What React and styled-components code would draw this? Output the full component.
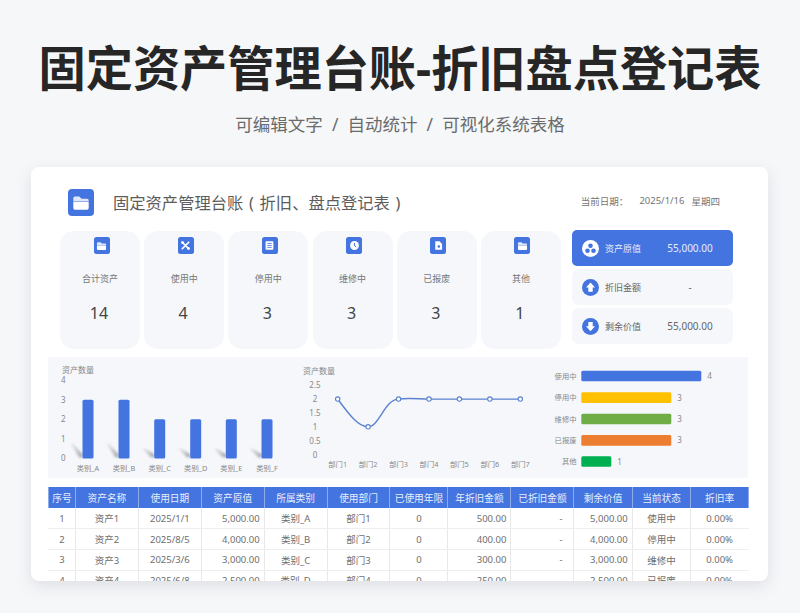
import React from "react";
import styled, { createGlobalStyle } from "styled-components";

const FONT = `"Noto Sans", "Noto Sans CJK SC", sans-serif`;
const BLUE = "#4374e0";

const GlobalStyle = createGlobalStyle`
    html, body {
        margin: 0;
        padding: 0;
        background: #f6f7f9;
        font-family: ${FONT};
    }
`;

const stats = [
    { label: "合计资产", value: 14, icon: "folder" },
    { label: "使用中", value: 4, icon: "tools" },
    { label: "停用中", value: 3, icon: "list" },
    { label: "维修中", value: 3, icon: "clock" },
    { label: "已报废", value: 3, icon: "file" },
    { label: "其他", value: 1, icon: "folder" },
];

const columns = [
    { title: "序号", width: 27, key: "id" },
    { title: "资产名称", width: 62.9, key: "name" },
    { title: "使用日期", width: 62.9, key: "date" },
    { title: "资产原值", width: 62.9, key: "cost", right: true },
    { title: "所属类别", width: 62.9, key: "type" },
    { title: "使用部门", width: 62.9, key: "dept" },
    { title: "已使用年限", width: 58, key: "years" },
    { title: "年折旧金额", width: 63, key: "yearly", right: true },
    { title: "已折旧金额", width: 63, key: "total", right: true, dash: true },
    { title: "剩余价值", width: 58.3, key: "left", right: true },
    { title: "当前状态", width: 58.5, key: "state" },
    { title: "折旧率", width: 57.7, key: "rate" },
];

const rows = [
    { id: 1, name: "资产1", date: "2025/1/1", cost: "5,000.00", type: "类别_A", dept: "部门1", years: 0, yearly: "500.00", total: "-", left: "5,000.00", state: "使用中", rate: "0.00%" },
    { id: 2, name: "资产2", date: "2025/8/5", cost: "4,000.00", type: "类别_B", dept: "部门2", years: 0, yearly: "400.00", total: "-", left: "4,000.00", state: "停用中", rate: "0.00%" },
    { id: 3, name: "资产3", date: "2025/3/6", cost: "3,000.00", type: "类别_C", dept: "部门3", years: 0, yearly: "300.00", total: "-", left: "3,000.00", state: "维修中", rate: "0.00%" },
    { id: 4, name: "资产4", date: "2025/6/8", cost: "2,500.00", type: "类别_D", dept: "部门4", years: 0, yearly: "250.00", total: "-", left: "2,500.00", state: "已报废", rate: "0.00%" },
];

const categoryBars = [
    { label: "类别_A", value: 3, x: 88 },
    { label: "类别_B", value: 3, x: 124 },
    { label: "类别_C", value: 2, x: 159.7 },
    { label: "类别_D", value: 2, x: 195.7 },
    { label: "类别_E", value: 2, x: 231.3 },
    { label: "类别_F", value: 2, x: 267 },
];

const deptPoints = [2, 1, 2, 2, 2, 2, 2];

const stateBars = [
    { label: "使用中", value: 4, color: BLUE, y: 376 },
    { label: "停用中", value: 3, color: "#ffc000", y: 397.6 },
    { label: "维修中", value: 3, color: "#70ad47", y: 419 },
    { label: "已报废", value: 3, color: "#ed7d31", y: 440.4 },
    { label: "其他", value: 1, color: "#00b050", y: 461.5 },
];

const Page = styled.div`
    width: 800px;
    height: 613px;
    overflow: hidden;
    padding-top: 39px;
    box-sizing: border-box;
`;

const Heading = styled.h1`
    margin: 0;
    height: 60px;
    line-height: 59px;
    text-align: center;
    font-size: 47.2px;
    font-weight: 700;
    color: #262626;
    white-space: nowrap;
`;

const Subheading = styled.p`
    margin: 13px 0 0;
    height: 24px;
    line-height: 24px;
    text-align: center;
    font-size: 17.5px;
    color: #6b6b6b;
    white-space: pre;
`;

const Sheet = styled.div`
    width: 737px;
    height: 414px;
    margin: 31px 0 0 31px;
    box-sizing: border-box;
    padding-top: 21px;
    background: #fff;
    border-radius: 8px;
    overflow: hidden;
    box-shadow: 0 5px 16px rgba(60, 70, 90, 0.13);
`;

const SheetHeader = styled.div`
    display: flex;
    align-items: center;
    height: 28px;
    padding-left: 37px;
`;

const SheetTitle = styled.div`
    margin-left: 19px;
    font-size: 16.3px;
    color: #5c5c5c;
    white-space: nowrap;
`;

const Paren = styled.span`
    display: inline-block;
    width: 1em;
    text-align: center;
`;

const DateBox = styled.div`
    display: flex;
    margin-left: auto;
    margin-right: 48px;
    margin-top: -2px;
    font-size: 9.5px;
    color: #757575;
    white-space: nowrap;
`;

const DateValue = styled.span`
    margin-left: ${(p) => p.$gap}px;
`;

const Summary = styled.div`
    display: flex;
    margin: 15px 0 0 29px;
    height: 118px;
`;

const StatGrid = styled.div`
    display: grid;
    grid-template-columns: repeat(6, 80px);
    column-gap: 4.2px;
    width: 501px;
`;

const StatCard = styled.div`
    display: flex;
    flex-direction: column;
    align-items: center;
    box-sizing: border-box;
    padding-top: 6px;
    border-radius: 14px;
    background: #f5f7fb;
`;

const IconTile = styled.span`
    display: flex;
    align-items: center;
    justify-content: center;
    width: ${(p) => p.$size}px;
    height: ${(p) => p.$size + 1}px;
    border-radius: ${(p) => (p.$size > 20 ? 4 : 2.5)}px;
    background: ${BLUE};
    flex-shrink: 0;
`;

const StatIcon = styled(IconTile)`
    margin-left: 3px;
`;

const StatLabel = styled.div`
    margin-top: 17px;
    line-height: 16px;
    font-size: 9px;
    color: #777;
`;

const StatValue = styled.div`
    margin: 14px 2px 0 0;
    line-height: 24px;
    font-size: 16px;
    color: #444;
`;

const SidePanel = styled.div`
    display: flex;
    flex-direction: column;
    gap: 3px;
    width: 161px;
    margin: -1px 0 0 11px;
`;

const SideRow = styled.div`
    display: flex;
    align-items: center;
    height: 36px;
    padding-left: 10px;
    border-radius: ${(p) => (p.$active ? 5 : 7)}px;
    background: ${(p) => (p.$active ? BLUE : "#f5f7fb")};
    color: ${(p) => (p.$active ? "#e6edfb" : "#666")};
`;

const SideLabel = styled.span`
    margin-left: 6px;
    width: 42px;
    font-size: 9px;
    white-space: nowrap;
`;

const SideValue = styled.span`
    flex: 1;
    text-align: center;
    font-size: 10px;
`;

const ChartPanel = styled.div`
    display: flex;
    width: 700px;
    height: 121px;
    margin: 8px 0 0 17px;
    background: #f5f7fb;
`;

const ChartText = styled.text`
    font-family: ${FONT};
    font-size: ${(p) => p.$size || 8}px;
    fill: #888;
`;

const AssetTable = styled.table`
    width: 700px;
    margin: 9px 0 0 17px;
    table-layout: fixed;
    border-collapse: collapse;
`;

const HeadCell = styled.th`
    height: 21px;
    padding: 0;
    background: ${BLUE};
    border-left: 1px solid #8eabeb;
    border-right: 1px solid #8eabeb;
    font-size: 9.7px;
    font-weight: 400;
    color: #e8effc;
    text-align: center;
    white-space: nowrap;
`;

const Cell = styled.td`
    height: 20.7px;
    box-sizing: border-box;
    padding: 0 ${(p) => (p.$dash ? 11 : p.$right ? 4 : 0)}px 0 0;
    border-left: 1px solid #e8e8e8;
    border-right: 1px solid #e8e8e8;
    border-bottom: 1px solid #eeeeee;
    font-size: 9.5px;
    color: #6e6e6e;
    text-align: ${(p) => (p.$right ? "right" : "center")};
    white-space: nowrap;
    &:first-child {
        border-left-color: transparent;
    }
    &:last-child {
        border-right-color: transparent;
    }
`;

const Glyph = ({ name, size }) => {
    const shapes = {
        folder: (
            <>
                <path d="M3 6.5A1.5 1.5 0 0 1 4.5 5h4l2 2h5A1.5 1.5 0 0 1 17 8.5v1H3z" fill="#dfe8fb" />
                <path d="M3 10h14v5.5a1.5 1.5 0 0 1-1.5 1.5h-11A1.5 1.5 0 0 1 3 15.5z" fill="#fff" />
            </>
        ),
        tools: (
            <>
                <path d="M5 5l10 10M15 5L5 15" stroke="#fff" strokeWidth="2.6" strokeLinecap="round" />
                <circle cx="5.5" cy="5.5" r="2.2" fill="#fff" />
                <circle cx="14.5" cy="14.5" r="2.2" fill="#fff" />
            </>
        ),
        list: (
            <>
                <rect x="4" y="3.5" width="12" height="13" rx="1.2" fill="#fff" />
                <path d="M6.5 7h7M6.5 10h7M6.5 13h7" stroke={BLUE} strokeWidth="1.2" />
            </>
        ),
        clock: (
            <>
                <circle cx="10" cy="10" r="6.8" fill="#fff" />
                <path d="M10 6v4.2l2.6 2" stroke={BLUE} strokeWidth="1.5" fill="none" />
            </>
        ),
        file: (
            <>
                <path d="M5 3.5h6.5L15.5 7.5v9h-10.5z" fill="#fff" />
                <circle cx="10.5" cy="11.5" r="2" fill={BLUE} />
            </>
        ),
    };
    return (
        <svg width={size} height={size} viewBox="0 0 20 20">
            {shapes[name]}
        </svg>
    );
};

const SideIcon = ({ name, active }) => {
    const bg = active ? "#fff" : BLUE;
    const fg = active ? BLUE : "#fff";
    return (
        <svg width="17" height="17" viewBox="0 0 17 17">
            <circle cx="8.5" cy="8.5" r="8.5" fill={bg} />
            {name === "stack" && (
                <>
                    <circle cx="8.5" cy="5.8" r="2.3" fill={fg} />
                    <circle cx="5.5" cy="10.8" r="2.3" fill={fg} />
                    <circle cx="11.5" cy="10.8" r="2.3" fill={fg} />
                </>
            )}
            {name === "up" && <path d="M8.5 3.5L13 8.5h-2.3v4.2H6.3V8.5H4z" fill={fg} />}
            {name === "down" && <path d="M6.3 4h4.4v4.2H13L8.5 13.3 4 8.2h2.3z" fill={fg} />}
        </svg>
    );
};

const CategoryChart = () => (
    <svg width="242" height="121" viewBox="48 357 242 121">
        <defs>
            <linearGradient id="barShade" x1="0" y1="0" x2="1" y2="0">
                <stop offset="0" stopColor="#b4b7bd" stopOpacity="0.15" />
                <stop offset="1" stopColor="#85888f" stopOpacity="0.75" />
            </linearGradient>
            <filter id="soft" x="-30%" y="-30%" width="160%" height="160%">
                <feGaussianBlur stdDeviation="1.1" />
            </filter>
        </defs>
        <ChartText x="62" y="373">资产数量</ChartText>
        {[4, 3, 2, 1, 0].map((n) => (
            <ChartText key={n} x="61" y={458 - n * 19.5 + 3}>
                {n}
            </ChartText>
        ))}
        {categoryBars.map((bar) => {
            const top = 458.5 - bar.value * 19.6;
            const left = bar.x - 5.5;
            const tip = bar.value === 3 ? 14 : 9;
            return (
                <g key={bar.label}>
                    <polygon
                        points={`${left - 12},${458 - tip} ${left - 10},${458 - tip - 1} ${left},${454} ${left},458 ${left - 4},457`}
                        fill="url(#barShade)"
                        filter="url(#soft)"
                    />
                    <rect x={left} y={top} width="11" height={bar.value * 19.6} rx="1.5" fill={BLUE} />
                    <ChartText x={bar.x} y="471" textAnchor="middle" $size="7.3">
                        {bar.label}
                    </ChartText>
                </g>
            );
        })}
    </svg>
);

const DeptChart = () => {
    const px = (i) => 337.7 + i * 30.43;
    const py = (v) => 454.5 - v * 27.7;
    return (
        <svg width="250" height="121" viewBox="290 357 250 121">
            <ChartText x="303" y="374">资产数量</ChartText>
            {[0, 0.5, 1, 1.5, 2, 2.5].map((n) => (
                <ChartText key={n} x="315" y={py(n) + 3} textAnchor="middle">
                    {n}
                </ChartText>
            ))}
            <path
                d={`M${px(0)} ${py(2)} C348 413 358 427 ${px(1)} ${py(1)} C379 427 385 399 ${px(2)} ${py(2)} C408 397.5 419 399 ${px(3)} ${py(2)} L${px(6)} ${py(2)}`}
                fill="none"
                stroke="#5b83cf"
                strokeWidth="1.4"
            />
            {deptPoints.map((v, i) => (
                <g key={i}>
                    <circle cx={px(i)} cy={py(v)} r="2.2" fill="#fff" stroke="#5b83cf" strokeWidth="1.1" />
                    <ChartText x={px(i)} y="467" textAnchor="middle" $size="7.3">
                        {`部门${i + 1}`}
                    </ChartText>
                </g>
            ))}
        </svg>
    );
};

const StateChart = () => (
    <svg width="208" height="121" viewBox="540 357 208 121">
        {stateBars.map((bar) => (
            <g key={bar.label}>
                <ChartText x="576.5" y={bar.y + 2.7} textAnchor="end" $size="7.3">
                    {bar.label}
                </ChartText>
                <rect x="581.3" y={bar.y - 5.3} width={bar.value * 30} height="10.6" rx="1.5" fill={bar.color} />
                <ChartText x={581.3 + bar.value * 30 + 6} y={bar.y + 3}>
                    {bar.value}
                </ChartText>
            </g>
        ))}
    </svg>
);

export default function App() {
    return (
        <Page>
            <GlobalStyle />
            <Heading>固定资产管理台账-折旧盘点登记表</Heading>
            <Subheading>可编辑文字  /  自动统计  /  可视化系统表格</Subheading>
            <Sheet>
                <SheetHeader>
                    <IconTile $size={26}>
                        <Glyph name="folder" size={22} />
                    </IconTile>
                    <SheetTitle>
                        固定资产管理台账<Paren>(</Paren>折旧、盘点登记表<Paren>)</Paren>
                    </SheetTitle>
                    <DateBox>
                        <span>当前日期：</span>
                        <DateValue $gap={11}>2025/1/16</DateValue>
                        <DateValue $gap={7}>星期四</DateValue>
                    </DateBox>
                </SheetHeader>
                <Summary>
                    <StatGrid>
                        {stats.map((item) => (
                            <StatCard key={item.label}>
                                <StatIcon $size={16}>
                                    <Glyph name={item.icon} size={13} />
                                </StatIcon>
                                <StatLabel>{item.label}</StatLabel>
                                <StatValue>{item.value}</StatValue>
                            </StatCard>
                        ))}
                    </StatGrid>
                    <SidePanel>
                        <SideRow $active>
                            <SideIcon name="stack" active />
                            <SideLabel>资产原值</SideLabel>
                            <SideValue>55,000.00</SideValue>
                        </SideRow>
                        <SideRow>
                            <SideIcon name="up" />
                            <SideLabel>折旧金额</SideLabel>
                            <SideValue>-</SideValue>
                        </SideRow>
                        <SideRow>
                            <SideIcon name="down" />
                            <SideLabel>剩余价值</SideLabel>
                            <SideValue>55,000.00</SideValue>
                        </SideRow>
                    </SidePanel>
                </Summary>
                <ChartPanel>
                    <CategoryChart />
                    <DeptChart />
                    <StateChart />
                </ChartPanel>
                <AssetTable>
                    <colgroup>
                        {columns.map((col) => (
                            <col key={col.key} style={{ width: col.width }} />
                        ))}
                    </colgroup>
                    <thead>
                        <tr>
                            {columns.map((col) => (
                                <HeadCell key={col.key}>{col.title}</HeadCell>
                            ))}
                        </tr>
                    </thead>
                    <tbody>
                        {rows.map((row) => (
                            <tr key={row.id}>
                                {columns.map((col) => (
                                    <Cell key={col.key} $right={col.right} $dash={col.dash}>
                                        {row[col.key]}
                                    </Cell>
                                ))}
                            </tr>
                        ))}
                    </tbody>
                </AssetTable>
            </Sheet>
        </Page>
    );
}
